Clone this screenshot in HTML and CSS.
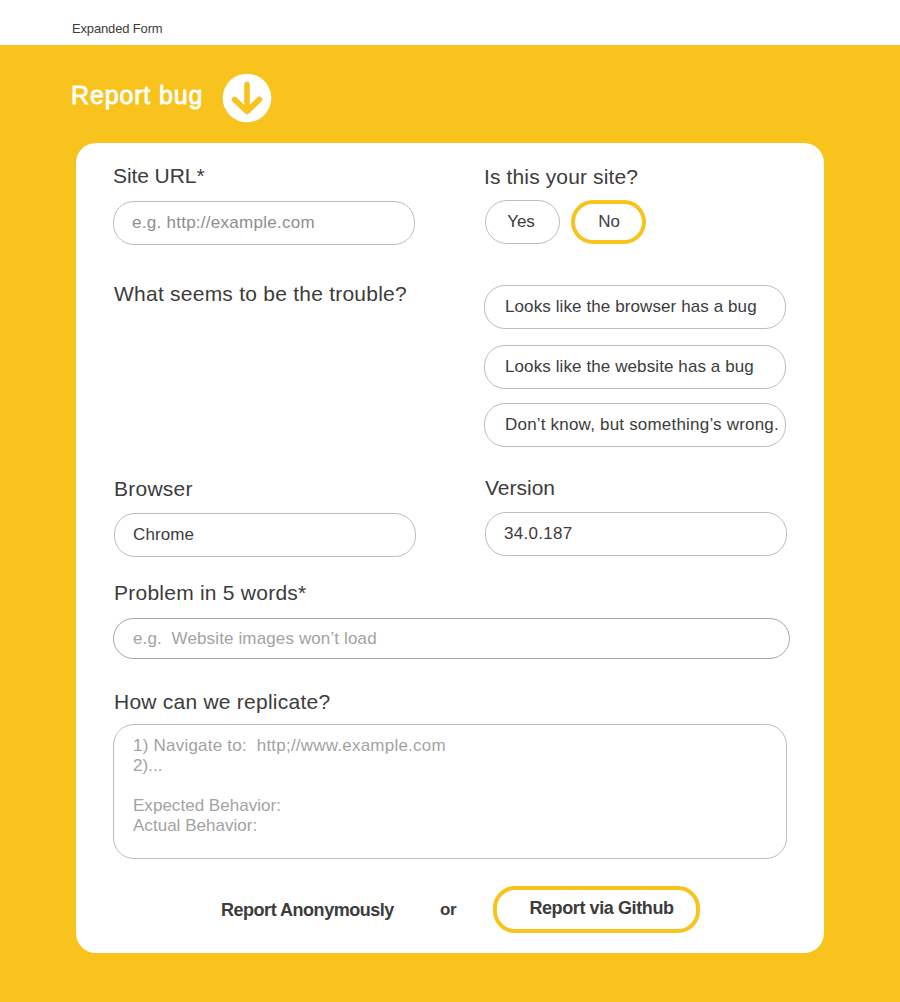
FILE: index.html
```html
<!DOCTYPE html>
<html lang="en">
<head>
<meta charset="utf-8">
<title>Report bug</title>
<link rel="stylesheet" href="styles.css">
</head>
<body>
<header class="topbar">Expanded Form</header>
<main class="page">
  <div class="heading">
    <h1 class="title">Report bug</h1>
    <svg class="arrow" width="50" height="50" viewBox="0 0 50 50" aria-hidden="true">
      <circle cx="25" cy="25" r="24.3" fill="#fff"/>
      <path d="M25 11.6V38M12.6 26.4L25 38.6L37.4 26.4" fill="none" stroke="#f8c31c" stroke-width="5.6" stroke-linecap="round" stroke-linejoin="round"/>
    </svg>
  </div>
  <form class="card">
    <div class="row row-site">
      <div class="col">
        <label class="label l-url" for="url">Site URL*</label>
        <input class="box t-url" id="url" placeholder="e.g. http://example.com">
      </div>
      <div class="col col-own">
        <span class="label l-own">Is this your site?</span>
        <div class="choices">
          <button type="button" class="pill">Yes</button>
          <button type="button" class="pill selected">No</button>
        </div>
      </div>
    </div>
    <div class="row row-trouble">
      <div class="col"><span class="label l-trouble">What seems to be the trouble?</span></div>
      <div class="options">
        <button type="button" class="box option o-browser">Looks like the browser has a bug</button>
        <button type="button" class="box option o-website">Looks like the website has a bug</button>
        <button type="button" class="box option o-unknown">Don’t know, but something’s wrong.</button>
      </div>
    </div>
    <div class="row row-browser">
      <div class="col col-browser">
        <label class="label l-browser" for="browser">Browser</label>
        <input class="box t-browser" id="browser" value="Chrome">
      </div>
      <div class="col col-version">
        <label class="label l-version" for="version">Version</label>
        <input class="box t-version" id="version" value="34.0.187">
      </div>
    </div>
    <div class="field-problem">
      <label class="label l-problem" for="problem">Problem in 5 words*</label>
      <input class="box box-problem" id="problem" placeholder="e.g.  Website images won’t load">
    </div>
    <div class="field-steps">
      <span class="label l-steps" id="steps-label">How can we replicate?</span>
      <div class="box box-steps" role="textbox" aria-labelledby="steps-label">
        <div class="line line-url">1) Navigate to:  http;//www.example.com</div>
        <div class="line">2)...</div>
        <div class="line"></div>
        <div class="line">Expected Behavior:</div>
        <div class="line">Actual Behavior:</div>
      </div>
    </div>
    <div class="actions">
      <button type="button" class="anonymous">Report Anonymously</button>
      <span class="or">or</span>
      <button type="button" class="github">Report via Github</button>
    </div>
  </form>
</main>
</body>
</html>
```
FILE: styles.css
```css
* { box-sizing: border-box; }

body {
  margin: 0;
  color: #3c3c3c;
  background: #f8c31c;
  font-family: "Liberation Sans", Arial, sans-serif;
}

button, input {
  margin: 0;
  font: inherit;
  color: inherit;
  background: none;
  outline: none;
}

.topbar {
  height: 45px;
  padding: 21px 0 0 72px;
  background: #fff;
  font-size: 13px;
  line-height: 16px;
  letter-spacing: -0.15px;
}

.page {
  height: 957px;
  padding: 28px 76px 49px;
}

.heading {
  display: flex;
  width: 195px;
  height: 70px;
  margin-left: -5px;
  justify-content: space-between;
}

.title {
  margin: 7px 0 0;
  color: #fff;
  font-size: 25px;
  font-weight: 400;
  line-height: 30px;
  letter-spacing: 0.85px;
  white-space: nowrap;
  -webkit-text-stroke: 0.8px #fff;
}

.arrow { flex: none; margin-right: -6px; }

.card {
  height: 810px;
  padding: 21px 34px 0 37px;
  border-radius: 20px;
  background: #fff;
}

.label {
  display: block;
  margin-left: 1px;
  font-size: 21px;
  line-height: 24px;
  letter-spacing: 0.24px;
  white-space: nowrap;
}

.l-url { margin-left: 0; letter-spacing: -0.08px; }
.l-own { letter-spacing: 0.13px; }
.l-version { letter-spacing: 0; }

.box {
  display: block;
  width: 302px;
  height: 44px;
  padding: 0 18px;
  border: 1px solid #bdbdbd;
  border-radius: 21px;
  font-size: 17px;
  letter-spacing: 0.1px;
}

.box::placeholder { color: #a3a3a3; opacity: 1; }

.row { display: flex; }
.col { flex: none; width: 371px; }

.row-site { height: 121px; }
.row-site .box { margin-top: 13px; }
.t-url { letter-spacing: 0.27px; }
.t-url::placeholder { color: #8e8e8e; }
.t-version { letter-spacing: 0.28px; }
.col-own { padding: 1px 0 0 1px; }
.col-own .label { margin-left: -1px; }

.choices { display: flex; gap: 11px; margin-top: 11px; }

.pill {
  width: 75px;
  height: 44px;
  padding: 0 3px 0 0;
  border: 1px solid #bdbdbd;
  border-radius: 22px;
  font-size: 17px;
}

.pill.selected { padding: 0 0 0 1px; border: 4px solid #f8c31c; }

.row-trouble { height: 191px; }
.row-trouble .col { margin-top: -3px; }
.options { display: flex; flex-direction: column; }
.option { padding: 0 0 0 20px; text-align: left; white-space: nowrap; }
.o-website { margin-top: 16px; }
.o-unknown { margin-top: 14px; letter-spacing: 0.2px; }

.row-browser { height: 105px; }
.col-browser { padding: 1px 0 0 1px; }
.col-browser .label { margin-left: 0; }
.col-browser .box { margin-top: 12px; }
.col-version { padding-left: 1px; }
.col-version .label { margin-left: 0; }
.col-version .box { margin-top: 12px; }

.field-problem { height: 109px; }
.box-problem {
  width: 677px;
  height: 41px;
  margin-top: 13px;
  padding: 1px 19px 0;
  border-color: #a5a5a5;
  letter-spacing: 0.13px;
}

.field-steps { height: 196px; }
.box-steps {
  width: 674px;
  height: 135px;
  margin-top: 10px;
  padding: 11px 19px 0;
  color: #a3a3a3;
  line-height: 20px;
  letter-spacing: 0.03px;
}
.line { height: 20px; white-space: pre; }
.line-url { letter-spacing: 0.22px; }

.actions {
  display: flex;
  align-items: flex-start;
  padding-left: 107px;
  font-size: 18px;
  font-weight: 700;
  white-space: nowrap;
}

.anonymous { width: 219px; padding: 14px 0 0 1px; border: 0; text-align: left; letter-spacing: -0.47px; }
.or { width: 54px; padding: 14px 0 0 1px; font-size: 17px; letter-spacing: -0.3px; }
.github { width: 207px; height: 47px; padding: 0 0 3px 10px; border: 4px solid #f8c31c; border-radius: 22px; letter-spacing: -0.4px; }
```
